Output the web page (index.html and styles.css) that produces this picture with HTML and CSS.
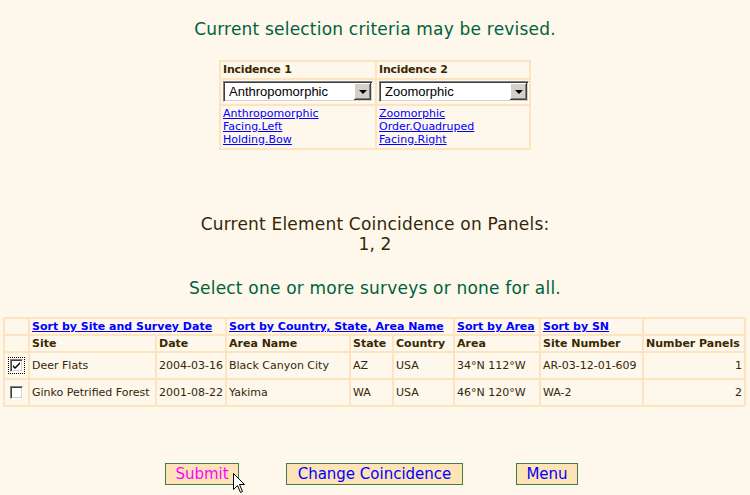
FILE: index.html
```html
<!DOCTYPE html>
<html lang="en">
<head>
  <meta charset="UTF-8">
  <title>Element Coincidence</title>
  <link rel="stylesheet" href="styles.css">
</head>
<body>
  <form id="coincForm">
    <p class="notice top">Current selection criteria may be revised.</p>

    <table class="incidence">
      <colgroup><col class="inc1"><col class="inc2"></colgroup>
      <tr>
        <th>Incidence 1</th>
        <th>Incidence 2</th>
      </tr>
      <tr class="pick">
        <td>
          <div class="combo">
            <select name="inc1">
              <option selected>Anthropomorphic</option>
              <option>Zoomorphic</option>
            </select>
            <span class="drop"></span>
          </div>
        </td>
        <td>
          <div class="combo">
            <select name="inc2">
              <option>Anthropomorphic</option>
              <option selected>Zoomorphic</option>
            </select>
            <span class="drop"></span>
          </div>
        </td>
      </tr>
      <tr class="links">
        <td>
          <a href="#">Anthropomorphic</a><br>
          <a href="#">Facing.Left</a><br>
          <a href="#">Holding.Bow</a>
        </td>
        <td>
          <a href="#">Zoomorphic</a><br>
          <a href="#">Order.Quadruped</a><br>
          <a href="#">Facing.Right</a>
        </td>
      </tr>
    </table>

    <div class="panels">
      <div>Current Element Coincidence on Panels:</div>
      <div>1, 2</div>
    </div>

    <p class="notice pick-msg">Select one or more surveys or none for all.</p>

    <table class="surveys">
      <colgroup>
        <col class="c-chk"><col class="c-site"><col class="c-date"><col class="c-aname">
        <col class="c-state"><col class="c-country"><col class="c-area"><col class="c-sn"><col class="c-np">
      </colgroup>
      <tr class="sort">
        <td></td>
        <td colspan="2"><a href="#">Sort by Site and Survey Date</a></td>
        <td colspan="3"><a href="#">Sort by Country, State, Area Name</a></td>
        <td><a href="#">Sort by Area</a></td>
        <td><a href="#">Sort by SN</a></td>
        <td></td>
      </tr>
      <tr class="head">
        <th></th>
        <th>Site</th>
        <th>Date</th>
        <th>Area Name</th>
        <th>State</th>
        <th>Country</th>
        <th>Area</th>
        <th>Site Number</th>
        <th>Number Panels</th>
      </tr>
      <tr class="row">
        <td class="chk"><span class="box focus"><svg width="9" height="9" viewBox="0 0 9 9"><path d="M1 4 L3 6 L8 1 L8 3 L3 8 L1 6 Z" fill="#000"/></svg></span></td>
        <td>Deer Flats</td>
        <td>2004-03-16</td>
        <td>Black Canyon City</td>
        <td>AZ</td>
        <td>USA</td>
        <td>34°N 112°W</td>
        <td>AR-03-12-01-609</td>
        <td class="num">1</td>
      </tr>
      <tr class="row">
        <td class="chk"><span class="box"></span></td>
        <td>Ginko Petrified Forest</td>
        <td>2001-08-22</td>
        <td>Yakima</td>
        <td>WA</td>
        <td>USA</td>
        <td>46°N 120°W</td>
        <td>WA-2</td>
        <td class="num">2</td>
      </tr>
    </table>

    <div class="buttons">
      <button type="submit" class="btn submit">Submit</button>
      <button type="button" class="btn change">Change Coincidence</button>
      <button type="button" class="btn menu">Menu</button>
    </div>
  </form>

  <svg class="cursor" width="13" height="21" viewBox="0 0 13 21">
    <path d="M0.5 0.5 L0.5 16.5 L4.5 12.5 L7.5 19.5 L9.5 18.5 L6.5 11.5 L11.5 11.5 Z" fill="#fff" stroke="#000" stroke-width="1"/>
  </svg>
</body>
</html>
```

FILE: styles.css
```css
body { margin: 0; background: #fef7ec; font-family: "DejaVu Sans", Verdana, sans-serif; font-size: 11px; color: #33270a; }
form { margin: 0; }
a { color: #0000ff; }

.notice { margin: 0; color: #00623d; font-size: 17px; letter-spacing: 0.2px; line-height: 20px; text-align: center; }
.top { padding-top: 19px; }
.pick-msg { margin-top: 24px; }

/* incidence picker */
.incidence { margin: 21px auto 0; border-spacing: 2px; background: #fde4bf; table-layout: fixed; width: 312px; }
.incidence td, .incidence th { background: #fef7ec; padding: 0 2px; text-align: left; vertical-align: top; }
.incidence th { height: 16px; line-height: 16px; color: #3b2800; font-weight: bold; letter-spacing: -0.2px; }
.inc1 { width: 154px; }
.inc2 { width: 152px; }
.pick td { height: 23px; padding: 1px 0 0 2px; }
.links td { height: 41px; line-height: 13px; padding-top: 1px; }

.combo { display: flex; width: 150px; height: 21px; box-sizing: border-box; background: #fff;
  border: 1px solid; border-color: #808080 #fff #fff #808080; box-shadow: inset 1px 1px #404040, inset -1px -1px #d4d0c8; padding: 1px; }
.combo select { flex: 1; min-width: 0; appearance: none; -webkit-appearance: none; border: none; background: transparent;
  font-family: "Liberation Sans", Arial, sans-serif; font-size: 13px; color: #000; padding: 0 0 0 4px; margin: 0; outline: none; }
.drop { width: 17px; height: 17px; flex: none; position: relative; background: #d4d0c8;
  box-shadow: inset -1px -1px #404040, inset 1px 1px #fff, inset -2px -2px #808080; }
.drop::after { content: ""; position: absolute; left: 5px; top: 7px; border: 4px solid transparent; border-top-color: #000; border-bottom: 0; }

/* panels */
.panels { margin: 64px 0 0; font-size: 17px; letter-spacing: 0.2px; line-height: 20px; text-align: center; color: #33270a; }

/* surveys */
.surveys { margin: 19px 0 0 3px; border-spacing: 2px; background: #fde4bf; table-layout: fixed; width: 743px; }
.surveys td, .surveys th { background: #fef7ec; padding: 0 2px; text-align: left; white-space: nowrap; overflow: hidden; }
.c-chk { width: 23px; }
.c-site { width: 125px; }
.c-date { width: 68px; }
.c-aname { width: 122px; }
.c-state { width: 41px; }
.c-country { width: 59px; }
.c-area { width: 84px; }
.c-sn { width: 101px; }
.c-np { width: 100px; }
.sort td { height: 15px; line-height: 15px; }
.sort a { font-weight: bold; }
.head th { height: 15px; line-height: 15px; font-weight: bold; color: #3b2800; }
.row td { height: 25px; }
.surveys .num { text-align: right; }
.surveys .chk { text-align: center; padding: 0; }

.box { display: inline-block; width: 13px; height: 13px; box-sizing: border-box; vertical-align: middle; background: #fff;
  border: 1px solid; border-color: #808080 #fff #fff #808080; box-shadow: inset 1px 1px #404040, inset -1px -1px #d4d0c8; padding: 1px; }
.box svg { display: block; }
.focus { outline: 1px dotted #000; outline-offset: 1px; }

/* buttons */
.buttons { display: flex; margin-top: 56px; padding-left: 165px; }
.btn { height: 22px; padding: 0 0 1px; background: #fde4b6; border: 1px solid #477a47; font-family: "DejaVu Sans", Verdana, sans-serif;
  font-size: 15px; color: #0000ff; cursor: pointer; }
.submit { width: 74px; color: #ff00ff; }
.change { width: 177px; margin-left: 47px; }
.menu { width: 62px; margin-left: 53px; }

.cursor { position: absolute; left: 233px; top: 473px; }
```
